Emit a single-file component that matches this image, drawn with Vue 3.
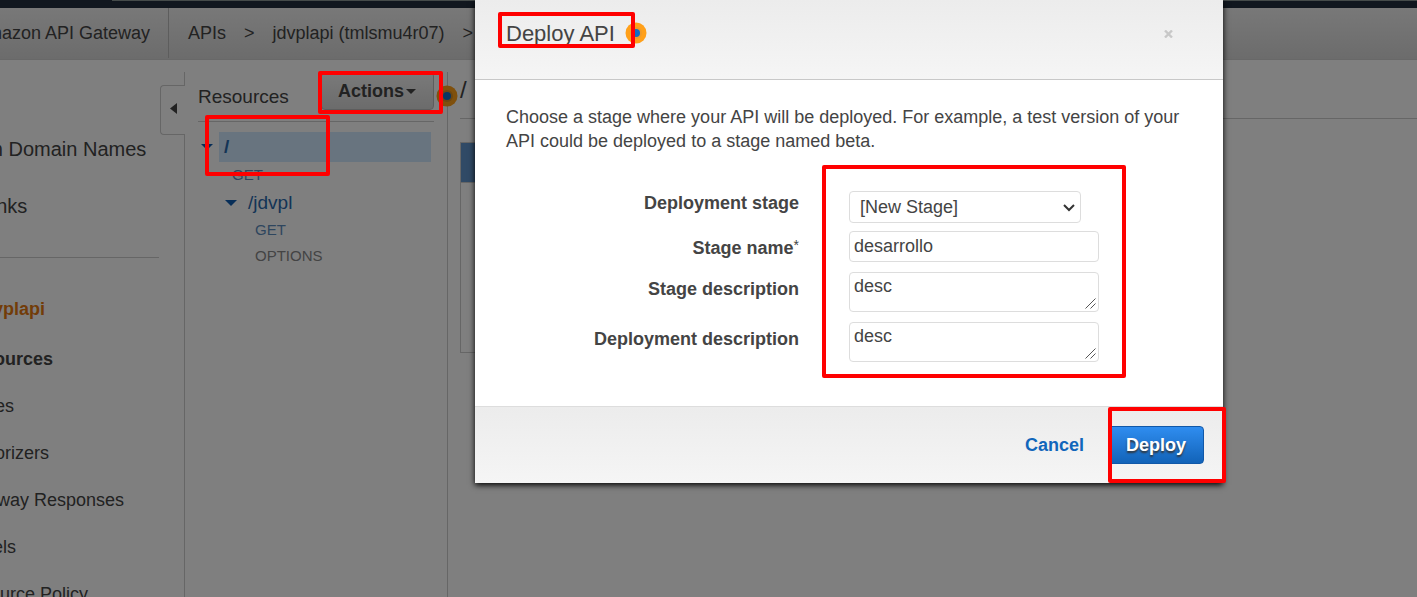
<script setup>
import { ref } from 'vue'

const stage = ref('[New Stage]')
const stageName = ref('desarrollo')
const stageDescription = ref('desc')
const deploymentDescription = ref('desc')
const apiLinks = ['Stages', 'Authorizers', 'Gateway Responses', 'Models', 'Resource Policy']
</script>

<template>
  <div class="page">
    <div class="topbar"><div class="search-edge"></div></div>
    <header class="crumbs">
      <div class="service"><a href="#">Amazon API Gateway</a></div>
      <nav class="trail" aria-label="Breadcrumb">
        <a href="#">APIs</a><span>&gt;</span><a href="#">jdvplapi (tmlsmu4r07)</a><span>&gt;</span>
      </nav>
    </header>

    <div class="columns">
      <aside class="sidebar">
        <nav class="side-nav" aria-label="API Gateway">
          <a class="big" href="#">Custom Domain Names</a>
          <a class="big" href="#">VPC Links</a>
          <hr />
          <a class="api" href="#">API: jdvplapi</a>
          <a class="sub current" href="#">Resources</a>
          <a v-for="l in apiLinks" :key="l" class="sub" href="#">{{ l }}</a>
        </nav>
        <div class="edge">
          <div class="edge-top"></div>
          <button class="collapse" aria-label="Collapse">
            <svg width="7" height="11" viewBox="0 0 7 11"><path d="M7 0v11L0 5.500z" fill="#444" /></svg>
          </button>
          <div class="edge-rest"></div>
        </div>
      </aside>

      <section class="resources">
        <div class="res-head">
          <h2>Resources</h2>
          <button class="actions">Actions<svg width="10" height="5" viewBox="0 0 10 5"><path d="M0 0h10L5 5z" fill="#444" /></svg></button>
        </div>
        <div class="tree">
          <div class="node root">
            <svg width="12" height="6" viewBox="0 0 12 6"><path d="M0 0h12L6 6z" fill="#0f5cb0" /></svg>
            <a href="#">/</a>
          </div>
          <a class="method first" href="#">GET</a>
          <div class="node child">
            <svg width="12" height="6" viewBox="0 0 12 6"><path d="M0 0h12L6 6z" fill="#0f5cb0" /></svg>
            <a href="#">/jdvpl</a>
          </div>
          <a class="method" href="#">GET</a>
          <a class="method options" href="#">OPTIONS</a>
        </div>
      </section>

      <main class="detail">
        <h1>/</h1>
        <div class="panel"><div class="panel-head"></div></div>
      </main>
    </div>

    <svg class="hotspot dot-actions" viewBox="0 0 22 22"><circle cx="11" cy="11" r="10.500" fill="#ffa01a" /><circle cx="11" cy="11" r="6" fill="#d98d24" /><circle cx="11" cy="11" r="4" fill="#0f6cc4" /></svg>

    <div class="overlay">
      <form class="modal" role="dialog" aria-labelledby="dlg-title" @submit.prevent>
        <div class="modal-head">
          <h2 id="dlg-title">Deploy API</h2>
          <button type="button" class="close" aria-label="Close">
            <svg width="9" height="8" viewBox="0 0 9 8"><path d="M1 .5l7 7M8 .5l-7 7" stroke="#c8c8c8" stroke-width="2.400" /></svg>
          </button>
        </div>
        <div class="modal-body">
          <p>Choose a stage where your API will be deployed. For example, a test version of your API could be deployed to a stage named beta.</p>
          <div class="fields">
            <label for="stage" class="first-label">Deployment stage</label>
            <div class="select-wrap">
              <select id="stage" v-model="stage"><option>[New Stage]</option></select>
              <svg width="12" height="8" viewBox="0 0 12 8"><path d="M1 1l5 5 5-5" fill="none" stroke="#333" stroke-width="2" /></svg>
            </div>
            <label for="name">Stage name<sup>*</sup></label>
            <input id="name" v-model="stageName" type="text" />
            <label for="sdesc">Stage description</label>
            <div class="area">
              <textarea id="sdesc" v-model="stageDescription" rows="1"></textarea>
              <svg width="11" height="11" viewBox="0 0 11 11"><path d="M.5 10.500l10-10M5.500 10.500l5-5" stroke="#555" /></svg>
            </div>
            <label for="ddesc">Deployment description</label>
            <div class="area">
              <textarea id="ddesc" v-model="deploymentDescription" rows="1"></textarea>
              <svg width="11" height="11" viewBox="0 0 11 11"><path d="M.5 10.500l10-10M5.500 10.500l5-5" stroke="#555" /></svg>
            </div>
          </div>
        </div>
        <div class="modal-foot">
          <button type="button" class="cancel">Cancel</button>
          <button type="submit" class="deploy">Deploy</button>
        </div>
      </form>
    </div>

    <svg class="hotspot dot-title" viewBox="0 0 22 22"><circle cx="11" cy="11" r="10.500" fill="#ffa01a" /><circle cx="11" cy="11" r="6" fill="#f09a28" /><circle cx="11" cy="11" r="4" fill="#0f6cc4" /></svg>
    <div class="mark mark-actions"></div>
    <div class="mark mark-root"></div>
    <div class="mark mark-title"></div>
    <div class="mark mark-fields"></div>
    <div class="mark mark-deploy"></div>
  </div>
</template>

<style>
body { margin: 0; }
</style>

<style scoped>
* { box-sizing: border-box; }
.page {
  position: relative;
  display: flex;
  flex-direction: column;
  height: 100vh;
  overflow: hidden;
  background: #fff;
  color: #444;
  font-family: "Liberation Sans", Arial, sans-serif;
  font-size: 18px;
  line-height: 24px;
}
a { color: inherit; text-decoration: none; }
button, input, select, textarea { font: inherit; color: inherit; }
h1, h2, p { margin: 0; font-weight: 400; }
svg { display: block; }

.topbar { flex: none; height: 8px; padding-left: 112px; background: #232f3e; }
.search-edge { height: 1px; background: #8b9794; }
.crumbs {
  flex: none;
  display: flex;
  height: 52px;
  background: linear-gradient(#f1f1f1, #d8d8d8);
  border-bottom: 1px solid #d0d0d0;
  white-space: nowrap;
}
.service {
  display: flex;
  flex: none;
  justify-content: flex-end;
  align-items: center;
  height: 50px;
  width: 169px;
  padding-right: 18px;
  border-right: 1px solid #bbb;
}
.trail { display: flex; align-items: center; gap: 18px; height: 50px; padding-left: 19px; }

.columns { flex: 1; display: flex; min-height: 0; }
.sidebar { flex: none; display: flex; justify-content: space-between; width: 185px; }
.side-nav {
  display: flex;
  flex: none;
  flex-direction: column;
  width: 225px;
  margin-left: -66px;
  padding-top: 77px;
  white-space: nowrap;
}
.big { font-size: 20px; margin-bottom: 33px; }
.side-nav hr { width: 100%; margin: 6px 0 39px; border: 0; border-top: 1px solid #ccc; }
.api { margin: 0 0 26px 2px; color: #e47911; font-weight: 700; }
.sub { margin: 0 0 23px 24px; }
.current { margin-left: 27px; font-weight: 700; }
.edge { display: flex; flex: none; flex-direction: column; align-items: flex-end; width: 25px; margin-top: 12px; }
.edge-top { flex: none; width: 1px; height: 13px; background: #ccc; }
.collapse {
  display: flex;
  flex: none;
  align-items: center;
  width: 25px;
  height: 50px;
  padding: 0 0 4px 9px;
  background: none;
  border: 1px solid #ccc;
  border-right: 0;
  border-radius: 4px 0 0 4px;
}
.edge-rest { flex: 1; width: 1px; background: #ccc; }

.resources { flex: none; width: 263px; margin-top: 12px; padding-left: 13px; border-right: 1px solid #ccc; }
.res-head { display: flex; justify-content: space-between; width: 236px; height: 50px; border-bottom: 1px solid #ccc; }
.res-head h2 { padding-top: 13px; font-size: 19px; }
.actions {
  display: flex;
  align-items: center;
  gap: 2px;
  width: 113px;
  height: 38px;
  padding: 0 0 0 16px;
  border: 1px solid #bbb;
  border-radius: 4px;
  background: linear-gradient(#f4f4f4, #d8d8d8);
  font-weight: 700;
}
.tree { display: flex; flex-direction: column; width: 233px; padding-top: 10px; font-size: 19px; }
.node { display: flex; align-items: center; color: #2868ac; }
.root { padding-left: 3px; gap: 6px; }
.root a { flex: 1; height: 30px; padding-left: 5px; line-height: 30px; background: #d1e9ff; font-weight: 700; }
.child { padding-left: 27px; gap: 11px; height: 29px; }
.method { height: 26px; padding-left: 57px; font-size: 15px; line-height: 26px; color: #5c8cbc; }
.first { padding-left: 34px; }
.options { color: #888; }

.detail { flex: 1; padding-left: 12px; }
.detail h1 { height: 59px; padding-top: 18px; border-bottom: 1px solid #ccc; font-size: 24px; }
.panel { max-width: 720px; height: 211px; margin-top: 23px; border: 1px solid #ccc; }
.panel-head { height: 40px; background: #6094cc; border-bottom: 1px solid #ccc; }

.overlay { position: absolute; inset: 0; padding: 0 194px 0 475px; background: rgba(0, 0, 0, .5); }
.modal { background: #fff; box-shadow: 0 2px 6px #000; }
.modal-head {
  display: flex;
  justify-content: space-between;
  align-items: center;
  height: 80px;
  padding: 0 50px 12px 31px;
  background: linear-gradient(#ececec, #f5f5f5);
  border-bottom: 1px solid #c8c8c8;
}
.modal-head h2 { font-size: 22px; }
.close { padding: 0; border: 0; background: none; }
.modal-body { padding: 25px 31px 34px; }
.fields { display: grid; grid-template-columns: 293px 250px; column-gap: 50px; margin-top: 38px; }
.fields label { padding-top: 5px; text-align: right; font-weight: 700; line-height: 24px; }
.fields .first-label { padding-top: 0; }
sup { font-size: 14px; font-weight: 400; line-height: 0; vertical-align: 4px; }
.select-wrap { position: relative; width: 232px; height: 32px; margin-bottom: 8px; }
.select-wrap svg { position: absolute; right: 6px; top: 13px; pointer-events: none; }
select, input, textarea { display: block; margin: 0; border: 1px solid #ddd; border-radius: 4px; background: #fff; outline: 0; }
select { width: 100%; height: 32px; padding: 0 10px; appearance: none; }
input { width: 100%; height: 31px; margin-bottom: 10px; padding: 0 4px; }
.area { position: relative; margin-bottom: 10px; }
.area svg { position: absolute; right: 3px; bottom: 3px; pointer-events: none; }
textarea { width: 100%; height: 40px; padding: 1px 4px; overflow: hidden; resize: none; }
.modal-foot {
  display: flex;
  justify-content: flex-end;
  align-items: center;
  gap: 24px;
  height: 77px;
  padding-right: 19px;
  background: linear-gradient(#ececec, #f5f5f5);
  border-top: 1px solid #ddd;
}
.modal-foot button { font-weight: 700; }
.cancel { padding: 0; border: 0; background: none; color: #1166bb; }
.deploy {
  height: 38px;
  padding: 0 17px;
  border: 1px solid #1158a8;
  border-radius: 4px;
  background: linear-gradient(#2f8df0, #1263b8);
  color: #fff;
  text-shadow: 0 2px 2px #333;
}

.hotspot { position: absolute; width: 22px; height: 22px; }
.dot-actions { left: 436px; top: 85px; }
.dot-title { left: 625px; top: 22px; }
.mark { position: absolute; border: 4px solid #f00; border-radius: 2px; pointer-events: none; }
.mark-actions { left: 318px; top: 71px; width: 125px; height: 43px; }
.mark-root { left: 205px; top: 115px; width: 125px; height: 61px; }
.mark-title { left: 498px; top: 12px; width: 137px; height: 36px; }
.mark-fields { left: 822px; top: 165px; width: 304px; height: 213px; }
.mark-deploy { left: 1108px; top: 407px; width: 118px; height: 76px; }
</style>
